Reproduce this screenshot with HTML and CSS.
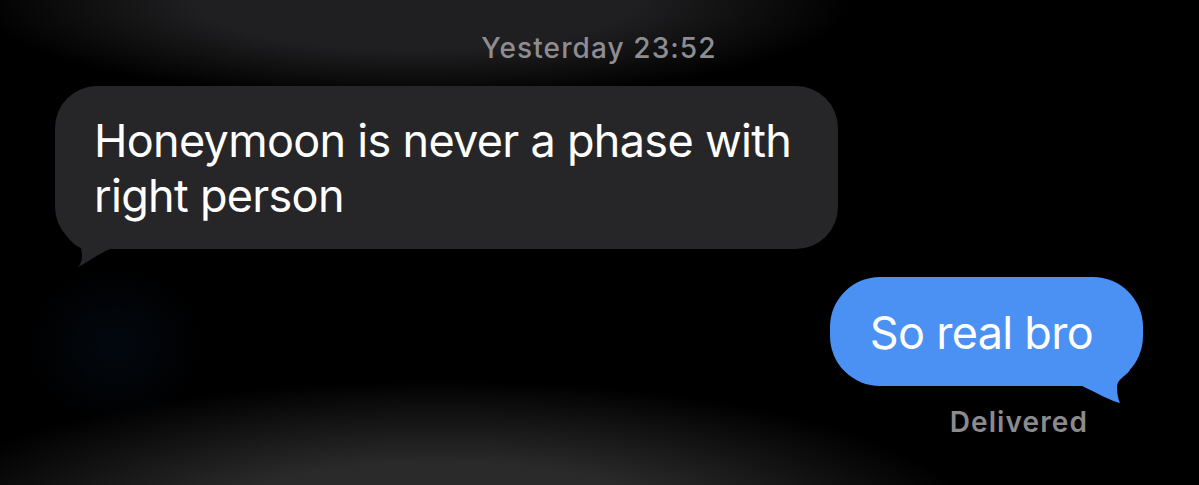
FILE: index.html
```html
<!DOCTYPE html>
<html lang="en">
<head>
  <meta charset="UTF-8">
  <meta name="viewport" content="width=device-width, initial-scale=1.0">
  <title>Messages</title>
  <link rel="stylesheet" href="styles.css">
</head>
<body>
  <div class="thread">
    <div class="stamp">Yesterday 23:52</div>

    <div class="row row-in">
      <div class="bubble bubble-in">
        Honeymoon is never a phase with right person
        <svg class="tail tail-in" viewBox="0 0 70 45" width="70" height="45">
          <path d="M12,10 C16,16 21,20 26,22 C28,30 27,37 23,41 C32,37 42,28 58,22 L58,10 Z"/>
        </svg>
      </div>
    </div>

    <div class="row row-out">
      <div class="bubble bubble-out">
        So real bro
        <svg class="tail tail-out" viewBox="0 0 70 45" width="70" height="45">
          <path d="M57,9 C52,16 44,18 44,26 C44,32 45,38 47,42 C38,40 24,32 9,25 L9,10 Z"/>
        </svg>
      </div>
    </div>

    <div class="status">Delivered</div>
  </div>
</body>
</html>
```

FILE: styles.css
```css
html, body {
  height: 100%;
}

body {
  margin: 0;
  background-color: #000;
  background-image:
    radial-gradient(ellipse 90px 80px at 115px 345px, rgba(6, 18, 34, 0.45), transparent 100%),
    radial-gradient(ellipse 540px 150px at 440px 530px, #2a2a2b 45%, transparent 100%),
    radial-gradient(ellipse 440px 100px at 415px 0, #1f1f21 50%, transparent 100%);
  font-family: Inter, "Noto Sans", sans-serif;
  color: #fff;
  overflow: hidden;
}

.thread {
  display: flex;
  flex-direction: column;
  padding: 32px 56px 0 55px;
}

.stamp {
  align-self: center;
  font-size: 28px;
  line-height: 32px;
  letter-spacing: 1.1px;
  font-weight: 500;
  color: #8d8d92;
}

.row {
  display: flex;
}

.row-in {
  justify-content: flex-start;
  margin-top: 22px;
}

.row-out {
  justify-content: flex-end;
  margin-top: 28px;
}

.bubble {
  position: relative;
  font-size: 45px;
  line-height: 55px;
  letter-spacing: -0.7px;
  font-weight: 400;
}

.bubble-in {
  max-width: 700px;
  padding: 27px 44px 26px 39px;
  background: #262628;
  border-radius: 42px;
}

.bubble-out {
  padding: 28px 50px 26px 40px;
  background: #4a91f3;
  border-radius: 50px;
}

.tail {
  position: absolute;
  bottom: -22px;
  display: block;
}

.tail-in {
  left: 0;
  fill: #262628;
}

.tail-out {
  right: 0;
  bottom: -20px;
  fill: #4a91f3;
}

.status {
  align-self: flex-end;
  margin: 20px 55px 0 0;
  font-size: 28px;
  line-height: 32px;
  letter-spacing: 1.1px;
  font-weight: 600;
  color: #8b8b8d;
}
```
